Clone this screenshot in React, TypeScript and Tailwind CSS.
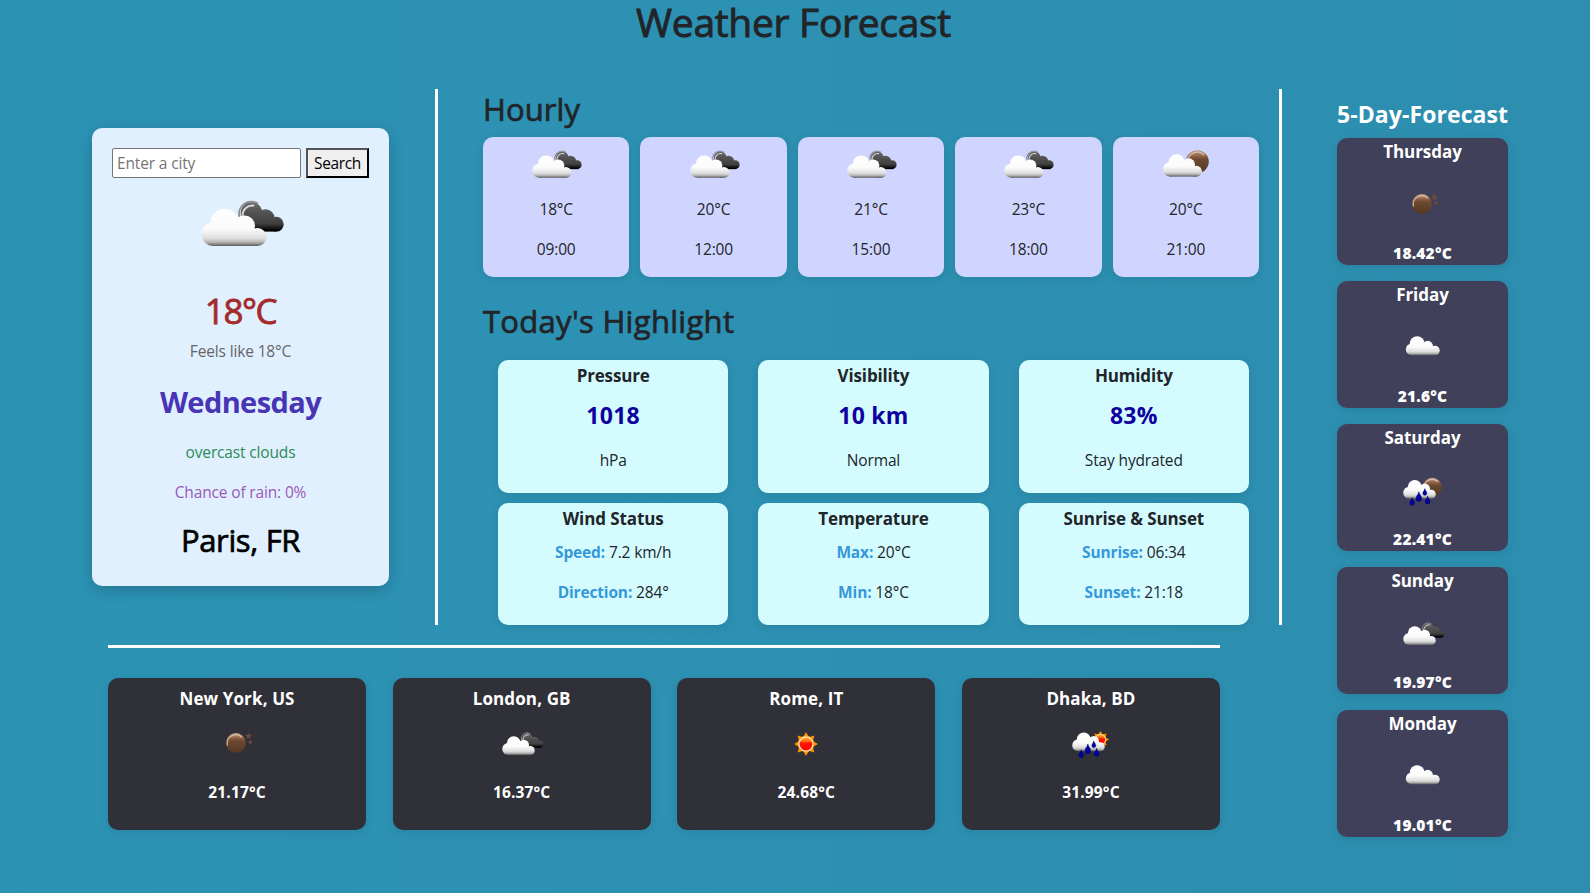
import { useId } from "react";

type IconKind = "broken" | "few-night" | "cloud" | "clear-night" | "rain-night" | "clear-day" | "rain-day";

function FrontCloud({ fill }: { fill: string }) {
  return (
    <g fill={fill}>
      <circle cx="33.5" cy="44.5" r="13.8" />
      <circle cx="22.5" cy="56" r="12" />
      <circle cx="53.5" cy="48" r="10.5" />
      <circle cx="66.5" cy="59" r="9" />
      <rect x="22" y="48" width="41" height="20" />
      <rect x="60" y="56" width="7" height="12" />
    </g>
  );
}

function Drop({ x, y, s }: { x: number; y: number; s: number }) {
  return (
    <path
      d="M0 -10C1 -4 6 -1 6 4A6 6 0 0 1 -6 4C-6 -1 -1 -4 0 -10Z"
      transform={`translate(${x} ${y}) scale(${s})`}
      fill="#0000a8"
      stroke="#000058"
      strokeWidth="1"
    />
  );
}

function Drops() {
  return (
    <>
      <Drop x={41.7} y={57} s={0.95} />
      <Drop x={53.7} y={48} s={0.68} />
      <Drop x={28.3} y={67} s={0.78} />
      <Drop x={59.3} y={64} s={0.82} />
    </>
  );
}

function Sun({ x, y, s, fill }: { x: number; y: number; s: number; fill: string }) {
  return (
    <g transform={`translate(${x} ${y}) scale(${s})`}>
      {[0, 45, 90, 135, 180, 225, 270, 315].map((a) => (
        <path key={a} d="M-6 -14L0 -24.5L6 -14Z" fill="#ff9500" transform={`rotate(${a})`} />
      ))}
      <circle r="17" fill="#ff9a1a" />
      <circle r="14.4" fill={fill} stroke="#fff0c8" strokeWidth="2.2" />
    </g>
  );
}

function Moon({ x, y, r, fill }: { x: number; y: number; r: number; fill: string }) {
  return (
    <g>
      <circle cx={x} cy={y} r={r} fill={fill} />
      <path
        d={`M${x - r * 0.85} ${y + r * 0.2}A${r * 0.86} ${r * 0.86} 0 0 1 ${x + r * 0.55} ${y - r * 0.62}`}
        fill="none"
        stroke="#e8cdbb"
        strokeWidth="2.6"
        strokeLinecap="round"
        opacity="0.75"
      />
    </g>
  );
}

function WeatherIcon({ kind, className }: { kind: IconKind; className: string }) {
  const id = useId();
  const white = `url(#${id}w)`;
  const dark = `url(#${id}d)`;
  const brown = `url(#${id}m)`;
  const red = `url(#${id}s)`;
  return (
    <svg viewBox="0 0 100 100" className={className}>
      <defs>
        <linearGradient id={`${id}w`} gradientUnits="userSpaceOnUse" x1="0" y1="30" x2="0" y2="68">
          <stop offset="0" stopColor="#ffffff" />
          <stop offset="0.55" stopColor="#fbfbfb" />
          <stop offset="0.8" stopColor="#dedede" />
          <stop offset="0.9" stopColor="#b4b4b4" />
          <stop offset="1" stopColor="#5c5c5c" />
        </linearGradient>
        <linearGradient id={`${id}d`} gradientUnits="userSpaceOnUse" x1="0" y1="24" x2="0" y2="54">
          <stop offset="0" stopColor="#6a6a6a" />
          <stop offset="0.4" stopColor="#505050" />
          <stop offset="0.72" stopColor="#404040" />
          <stop offset="0.95" stopColor="#000000" />
        </linearGradient>
        <linearGradient id={`${id}m`} x1="0" y1="0" x2="0" y2="1">
          <stop offset="0" stopColor="#c39f88" />
          <stop offset="0.3" stopColor="#86583b" />
          <stop offset="0.4" stopColor="#6c4930" />
          <stop offset="1" stopColor="#553823" />
        </linearGradient>
        <linearGradient id={`${id}s`} x1="0" y1="0" x2="0" y2="1">
          <stop offset="0" stopColor="#ffb030" />
          <stop offset="0.32" stopColor="#ff6a10" />
          <stop offset="0.42" stopColor="#ff1400" />
          <stop offset="1" stopColor="#ff0000" />
        </linearGradient>
      </defs>

      {kind === "broken" && (
        <>
          <g fill={dark}>
            <circle cx="60.5" cy="35" r="10.8" />
            <circle cx="74.5" cy="40.5" r="9.2" />
            <circle cx="85.3" cy="46.2" r="7.4" />
            <rect x="56" y="40" width="29.5" height="13.6" />
          </g>
          <path d="M48.6 39A12 12 0 0 1 67 25.8" fill="none" stroke="#8a8a8a" strokeWidth="1.8" />
          <path d="M51.6 38A9.8 9.8 0 0 1 62.5 27.6" fill="none" stroke="#d8d8d8" strokeWidth="2" strokeLinecap="round" />
          <FrontCloud fill={white} />
        </>
      )}

      {kind === "few-night" && (
        <>
          <Moon x={69} y={41} r={19} fill={brown} />
          <g transform="translate(1 -2)">
            <FrontCloud fill={white} />
          </g>
        </>
      )}

      {kind === "cloud" && (
        <g transform="translate(0 -7.3)" fill={white}>
          <circle cx="38.3" cy="44.3" r="14.6" />
          <circle cx="27.5" cy="56.2" r="11.8" />
          <circle cx="59.5" cy="49.5" r="10.5" />
          <circle cx="74" cy="58.5" r="9.5" />
          <rect x="27" y="50" width="47" height="18" />
        </g>
      )}

      {kind === "clear-night" && (
        <>
          <Moon x={47.7} y={44} r={20} fill={brown} />
          <g fill="#6f4c36">
            <path d="M73 23l1.8 4.7 5.2.3-4 3.3 1.3 5-4.3-2.8-4.3 2.8 1.3-5-4-3.3 5.2-.3z" />
            <path d="M76.5 37l1.3 3.4 3.7.2-2.9 2.4 1 3.6-3.1-2-3.1 2 1-3.6-2.9-2.4 3.7-.2z" />
          </g>
        </>
      )}

      {kind === "rain-night" && (
        <>
          <Moon x={68.5} y={38.5} r={19} fill={brown} />
          <g transform="translate(0 -6.5)">
            <FrontCloud fill={white} />
          </g>
          <Drops />
        </>
      )}

      {kind === "clear-day" && <Sun x={50} y={46} s={0.97} fill={red} />}

      {kind === "rain-day" && (
        <>
          <Sun x={69} y={37} s={0.7} fill={red} />
          <g transform="translate(2 -7.5)">
            <FrontCloud fill={white} />
          </g>
          <g transform="translate(2 -1.5)">
            <Drops />
          </g>
        </>
      )}
    </svg>
  );
}

const hourly: { icon: IconKind; temp: string; time: string }[] = [
  { icon: "broken", temp: "18°C", time: "09:00" },
  { icon: "broken", temp: "20°C", time: "12:00" },
  { icon: "broken", temp: "21°C", time: "15:00" },
  { icon: "broken", temp: "23°C", time: "18:00" },
  { icon: "few-night", temp: "20°C", time: "21:00" },
];

const stats = [
  { title: "Pressure", value: "1018", note: "hPa" },
  { title: "Visibility", value: "10 km", note: "Normal" },
  { title: "Humidity", value: "83%", note: "Stay hydrated" },
];

const details = [
  { title: "Wind Status", rows: [["Speed:", "7.2 km/h"], ["Direction:", "284°"]] },
  { title: "Temperature", rows: [["Max:", "20°C"], ["Min:", "18°C"]] },
  { title: "Sunrise & Sunset", rows: [["Sunrise:", "06:34"], ["Sunset:", "21:18"]] },
];

const cities: { name: string; icon: IconKind; temp: string }[] = [
  { name: "New York, US", icon: "clear-night", temp: "21.17°C" },
  { name: "London, GB", icon: "broken", temp: "16.37°C" },
  { name: "Rome, IT", icon: "clear-day", temp: "24.68°C" },
  { name: "Dhaka, BD", icon: "rain-day", temp: "31.99°C" },
];

const days: { name: string; icon: IconKind; temp: string }[] = [
  { name: "Thursday", icon: "clear-night", temp: "18.42°C" },
  { name: "Friday", icon: "cloud", temp: "21.6°C" },
  { name: "Saturday", icon: "rain-night", temp: "22.41°C" },
  { name: "Sunday", icon: "broken", temp: "19.97°C" },
  { name: "Monday", icon: "cloud", temp: "19.01°C" },
];

function CurrentCard() {
  return (
    <section className="mt-[39px] flex h-[458px] w-[297px] flex-col items-center rounded-[10px] bg-[#e0f0ff] p-5 shadow-[0_4px_15px_rgba(0,0,0,0.2)]">
      <form className="flex h-[30px] w-[257px] shrink-0 justify-between" onSubmit={(e) => e.preventDefault()}>
        <input
          placeholder="Enter a city"
          className="h-[30px] w-[189px] rounded-[2px] border border-[#767676] bg-white px-[4px] text-[15.5px] tracking-[-0.15px] placeholder:text-[#757575]"
        />
        <button className="h-[30px] w-[63px] border-2 border-t-[#555] border-r-black border-b-black border-l-[#555] bg-[#efefef] text-[15.5px] leading-[26px] tracking-[-0.35px] text-black">
          Search
        </button>
      </form>
      <WeatherIcon kind="broken" className="size-[100px] shrink-0" />
      <div className="mt-[11px] text-[35px] leading-[44px] tracking-[-1.4px] text-[#a52a2a] [-webkit-text-stroke:0.8px_#a52a2a]">18°C</div>
      <p className="mt-[6px] leading-6 text-[#666]">Feels like 18°C</p>
      <div className="mt-[21px] text-[29px] leading-9 font-bold tracking-[-0.6px] text-[#4834b4]">Wednesday</div>
      <p className="mt-5 leading-6 text-[#2e8b57]">overcast clouds</p>
      <p className="mt-4 leading-6 text-[#9b59b6]">Chance of rain: 0%</p>
      <h2 className="mt-4 text-[31px] leading-10 tracking-[-0.35px] text-black [-webkit-text-stroke:0.7px_#000]">Paris, FR</h2>
    </section>
  );
}

function Center() {
  return (
    <section className="ml-[45px] flex w-[776px] flex-col">
      <h2 className="h-12 pt-px text-[31px] leading-[38px] tracking-[0.1px] [-webkit-text-stroke:0.7px_#212529]">Hourly</h2>
      <div className="grid h-[140px] grid-cols-5 gap-[11px]">
        {hourly.map((h) => (
          <div key={h.time} className="flex flex-col items-center rounded-[10px] bg-[#d0d5ff] shadow-[0_2px_8px_rgba(0,0,0,0.1)]">
            <WeatherIcon kind={h.icon} className="size-[60px]" />
            <p className="leading-6">{h.temp}</p>
            <p className="mt-4 leading-6">{h.time}</p>
          </div>
        ))}
      </div>
      <h2 className="mt-6 h-[59px] text-[31px] leading-[40px] tracking-[0.3px] [-webkit-text-stroke:0.7px_#212529]">Today's Highlight</h2>
      <div className="grid grid-cols-3 gap-x-[30px] gap-y-[10px] pr-[10px] pl-[15px] text-center">
        {stats.map((s) => (
          <div key={s.title} className="h-[133px] rounded-[10px] bg-[#d4fcff] pt-[4px] shadow-[0_2px_8px_rgba(0,0,0,0.1)]">
            <h3 className="text-[17px] leading-6 font-bold tracking-[-0.15px]">{s.title}</h3>
            <p className="mt-[9px] text-[23px] leading-9 font-bold tracking-[0.25px] text-[#1000a0]">{s.value}</p>
            <p className="mt-[15px] leading-6">{s.note}</p>
          </div>
        ))}
        {details.map((d) => (
          <div key={d.title} className="h-[122px] rounded-[10px] bg-[#d4fcff] pt-[4px] shadow-[0_2px_8px_rgba(0,0,0,0.1)]">
            <h3 className="text-[17px] leading-6 font-bold tracking-[-0.1px]">{d.title}</h3>
            {d.rows.map(([label, value]) => (
              <p key={label} className="mt-[9px] mb-4 leading-6 last:mt-4 last:mb-0">
                <span className="font-bold text-[#3498db]">{label}</span> {value}
              </p>
            ))}
          </div>
        ))}
      </div>
    </section>
  );
}

export default function App() {
  return (
    <div className="flex h-[893px] w-[1590px] flex-col overflow-hidden bg-linear-to-r from-[#2c93b5] to-[#2d8eaf] font-['Open_Sans','Noto_Sans',sans-serif] text-[15.5px] tracking-[-0.15px] text-[#212529]">
      <h1 className="h-[89px] pr-[3px] text-center text-[39px] leading-[44px] tracking-[-0.3px] [-webkit-text-stroke:0.9px_#212529]">Weather Forecast</h1>
      <div className="flex">
        <div className="ml-[92px] w-[1190px]">
          <div className="flex h-[536px]">
            <CurrentCard />
            <div className="ml-[46px] w-[3px] bg-white" />
            <Center />
            <div className="ml-5 w-[3px] bg-white" />
          </div>
          <div className="mt-5 ml-4 w-[1112px]">
            <div className="h-[3px] bg-white" />
            <div className="mt-[30px] grid grid-cols-4 gap-[26.6px]">
              {cities.map((c) => (
                <div key={c.name} className="flex h-[152px] flex-col items-center rounded-[10px] bg-[#303038] text-white shadow-[0_2px_8px_rgba(0,0,0,0.1)]">
                  <h3 className="mt-[9px] text-[17px] leading-6 font-bold tracking-[0.12px]">{c.name}</h3>
                  <WeatherIcon kind={c.icon} className="mt-[10px] size-[50px]" />
                  <p className="mt-[9px] text-[15.5px] leading-6 font-bold tracking-[0.15px]">{c.temp}</p>
                </div>
              ))}
            </div>
          </div>
        </div>
        <aside className="ml-[55px] w-[171px] text-white">
          <h2 className="h-[49px] pt-[9px] text-center text-[23px] leading-[32px] font-bold tracking-[0.08px] whitespace-nowrap">5-Day-Forecast</h2>
          <div className="flex flex-col gap-4">
            {days.map((d) => (
              <div key={d.name} className="flex h-[127px] flex-col items-center rounded-[10px] bg-[#40405a] shadow-[0_2px_8px_rgba(0,0,0,0.1)]">
                <h3 className="mt-[2px] text-[17px] leading-6 font-bold tracking-[-0.05px]">{d.name}</h3>
                <WeatherIcon kind={d.icon} className="mt-[18px] size-[50px]" />
                <p className="mt-[9px] text-[15.5px] leading-6 font-extrabold tracking-[0.2px]">{d.temp}</p>
              </div>
            ))}
          </div>
        </aside>
      </div>
    </div>
  );
}
